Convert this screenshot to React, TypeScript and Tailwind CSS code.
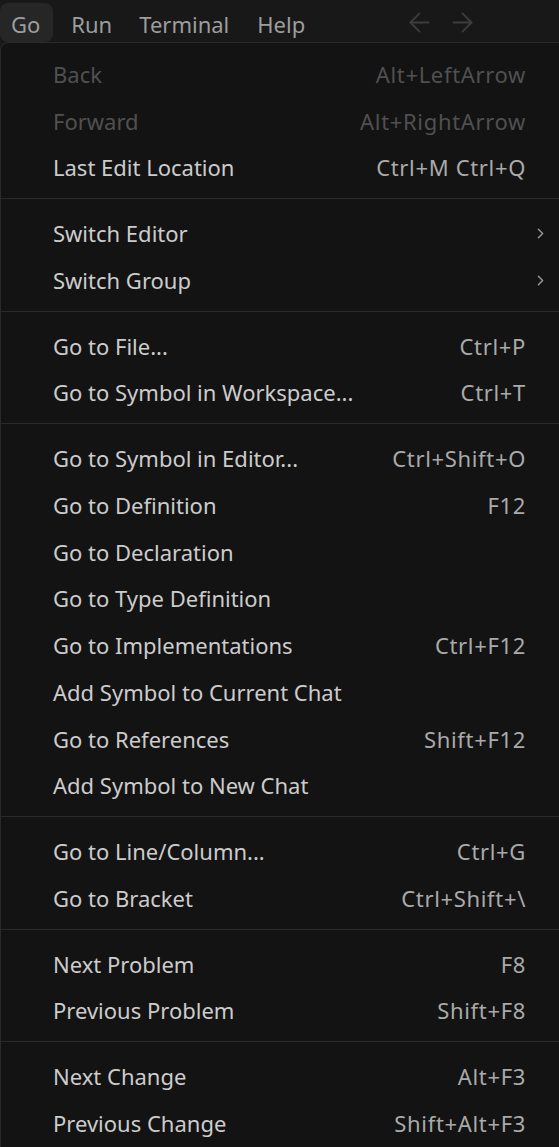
import { ChevronRight, ArrowLeft, ArrowRight } from "lucide-react";

type Item = { label: string; key?: string; disabled?: boolean; sub?: boolean };

const groups: Item[][] = [
  [
    { label: "Back", key: "Alt+LeftArrow", disabled: true },
    { label: "Forward", key: "Alt+RightArrow", disabled: true },
    { label: "Last Edit Location", key: "Ctrl+M Ctrl+Q" },
  ],
  [
    { label: "Switch Editor", sub: true },
    { label: "Switch Group", sub: true },
  ],
  [
    { label: "Go to File...", key: "Ctrl+P" },
    { label: "Go to Symbol in Workspace...", key: "Ctrl+T" },
  ],
  [
    { label: "Go to Symbol in Editor...", key: "Ctrl+Shift+O" },
    { label: "Go to Definition", key: "F12" },
    { label: "Go to Declaration" },
    { label: "Go to Type Definition" },
    { label: "Go to Implementations", key: "Ctrl+F12" },
    { label: "Add Symbol to Current Chat" },
    { label: "Go to References", key: "Shift+F12" },
    { label: "Add Symbol to New Chat" },
  ],
  [
    { label: "Go to Line/Column...", key: "Ctrl+G" },
    { label: "Go to Bracket", key: "Ctrl+Shift+\\" },
  ],
  [
    { label: "Next Problem", key: "F8" },
    { label: "Previous Problem", key: "Shift+F8" },
  ],
  [
    { label: "Next Change", key: "Alt+F3" },
    { label: "Previous Change", key: "Shift+Alt+F3" },
  ],
];

function Row({ item }: { item: Item }) {
  return (
    <div className="flex h-[46.75px] items-center pl-[52px] pr-[33px]">
      <span className={item.disabled ? "text-[#505050]" : "text-[#cccccc]"}>{item.label}</span>
      <span className="flex-1" />
      {item.key && (
        <span className={"tracking-[0.03em] " + (item.disabled ? "text-[#505050]" : "text-[#aaaaaa]")}>
          {item.key}
        </span>
      )}
      {item.sub && <ChevronRight size={17} strokeWidth={2} className="-mr-[23px] text-[#999999]" />}
    </div>
  );
}

export default function App() {
  return (
    <div
      className="h-[1147px] w-[559px] overflow-hidden bg-[#181818] text-[22px]"
      style={{ fontFamily: '"Noto Sans", "Open Sans", sans-serif' }}
    >
      <div className="flex h-[42px] items-center text-[#9d9d9d]">
        <div className="mt-[3px] flex h-[39px] items-center rounded-[8px] bg-[#262626] pl-[11px] pr-[13px] pt-[3px]">Go</div>
        <div className="px-[18px] pt-[6px]">Run</div>
        <div className="px-[9px] pt-[6px]">Terminal</div>
        <div className="px-[19px] pt-[6px]">Help</div>
        <div className="ml-[80px] mt-[3px] flex gap-[12px] text-[#3d3d3d]">
          <ArrowLeft size={31} strokeWidth={1.4} />
          <ArrowRight size={31} strokeWidth={1.4} />
        </div>
      </div>
      <div className="rounded-tl-[8px] border-t border-l border-[#2a2a2a] bg-[#131313] pt-[8px]">
        {groups.map((g, i) => (
          <div key={i}>
            {i > 0 && (
              <div className="pt-[7px] pb-[11px]">
                <div className="h-px bg-[#2a2a2a]" />
              </div>
            )}
            {g.map((item) => (
              <Row key={item.label} item={item} />
            ))}
          </div>
        ))}
      </div>
    </div>
  );
}
